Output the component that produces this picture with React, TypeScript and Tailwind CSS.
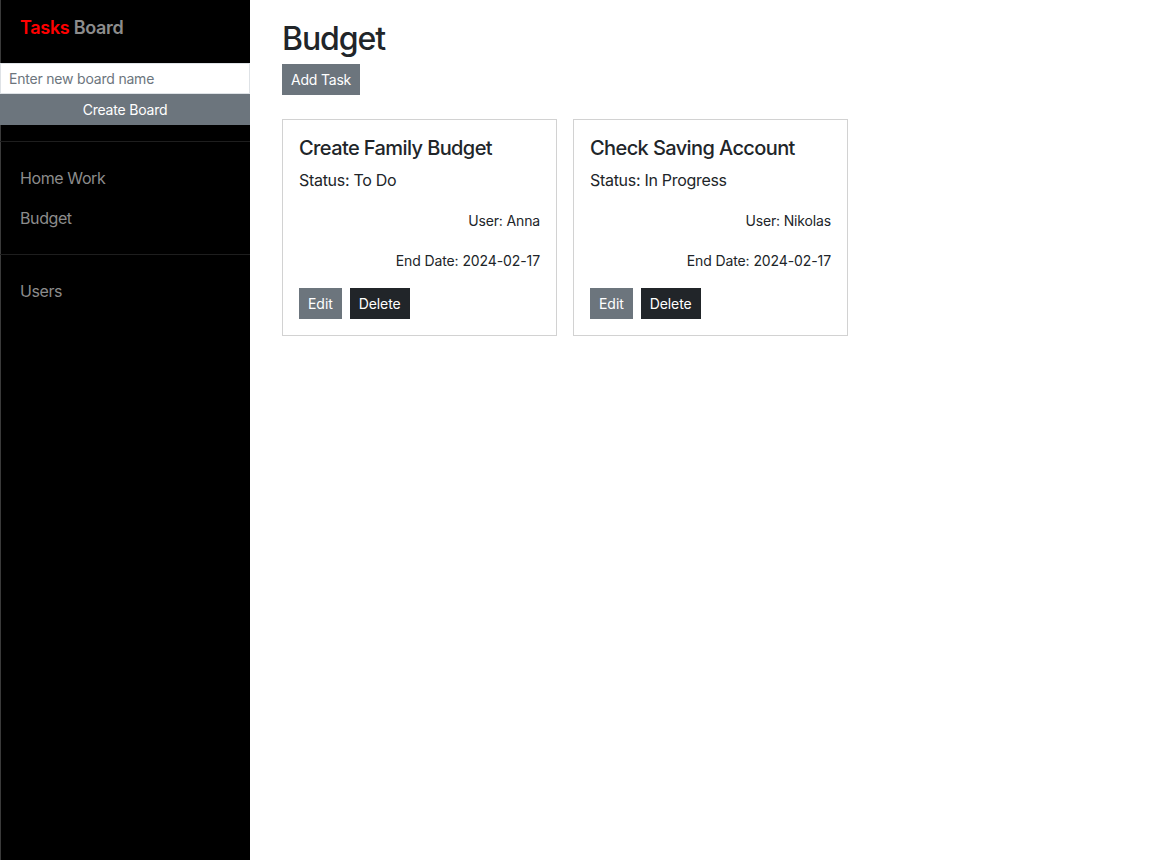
import React, { useState } from 'react';

interface Task {
  id: number;
  title: string;
  status: string;
  user: string;
  endDate: string;
}

const boards = ['Home Work', 'Budget'];

const tasks: Task[] = [
  { id: 1, title: 'Create Family Budget', status: 'To Do', user: 'Anna', endDate: '2024-02-17' },
  { id: 2, title: 'Check Saving Account', status: 'In Progress', user: 'Nikolas', endDate: '2024-02-17' },
];

function Sidebar() {
  const [name, setName] = useState('');

  return (
    <aside className="w-[250px] shrink-0 bg-black border-l border-[#3a3a3a] flex flex-col">
      <div className="pl-[19px] pt-[15px] h-[63px] text-[18px] leading-[26px] font-semibold tracking-[-0.3px]">
        <span className="text-[#ff0000]">Tasks</span>{' '}
        <span className="text-[#8c8c8c]">Board</span>
      </div>
      <form className="-ml-px flex flex-col" onSubmit={(e) => e.preventDefault()}>
        <input
          type="text"
          value={name}
          onChange={(e) => setName(e.target.value)}
          placeholder="Enter new board name"
          className="h-[31px] px-2 bg-white border border-[#dee2e6] text-sm tracking-[-0.2px] text-[#212529] placeholder:text-[#6c757d] outline-none"
        />
        <button
          type="submit"
          className="h-[31px] bg-[#6c757d] text-white text-sm tracking-[-0.2px]"
        >
          Create Board
        </button>
      </form>
      <hr className="-ml-px mt-4 mb-4 border-t border-[#1e1e1e]" />
      <nav className="flex flex-col">
        {boards.map((b) => (
          <a key={b} className="pl-[19px] py-2 text-base leading-6 tracking-[-0.4px] text-[#8c8c8c]">
            {b}
          </a>
        ))}
      </nav>
      <hr className="-ml-px mt-4 mb-4 border-t border-[#1e1e1e]" />
      <a className="pl-[19px] py-2 text-base leading-6 tracking-[-0.4px] text-[#8c8c8c]">Users</a>
    </aside>
  );
}

function TaskCard({ task }: { task: Task }) {
  return (
    <div className="w-[275px] border border-[#d2d2d2] px-4 pt-4 pb-4">
      <h5 className="text-[20px] leading-6 font-medium tracking-[-0.6px]">{task.title}</h5>
      <p className="mt-2 text-base leading-6 tracking-[-0.3px]">Status: {task.status}</p>
      <p className="mt-[18px] text-sm leading-[21px] tracking-[-0.15px] text-right">User: {task.user}</p>
      <p className="mt-[19px] text-sm leading-[21px] tracking-[-0.1px] text-right">End Date: {task.endDate}</p>
      <div className="mt-[17px] flex gap-2">
        <button className="px-2 py-1 border border-[#6c757d] bg-[#6c757d] text-white text-sm leading-[21px] tracking-[-0.05px]">
          Edit
        </button>
        <button className="px-2 py-1 border border-[#212529] bg-[#212529] text-white text-sm leading-[21px] tracking-[-0.1px]">
          Delete
        </button>
      </div>
    </div>
  );
}

export default function App() {
  return (
    <div
      className="flex h-[860px] bg-white text-[#212529]"
      style={{ fontFamily: 'Inter, "Noto Sans", sans-serif' }}
    >
      <Sidebar />
      <main className="flex-1 pl-8 pt-5">
        <h2 className="text-[32px] leading-[38px] font-medium tracking-[-1.1px] mb-[6px]">Budget</h2>
        <button className="px-2 py-1 border border-[#6c757d] bg-[#6c757d] text-white text-sm leading-[21px] tracking-[-0.2px]">
          Add Task
        </button>
        <div className="mt-6 flex gap-4">
          {tasks.map((t) => (
            <TaskCard key={t.id} task={t} />
          ))}
        </div>
      </main>
    </div>
  );
}
